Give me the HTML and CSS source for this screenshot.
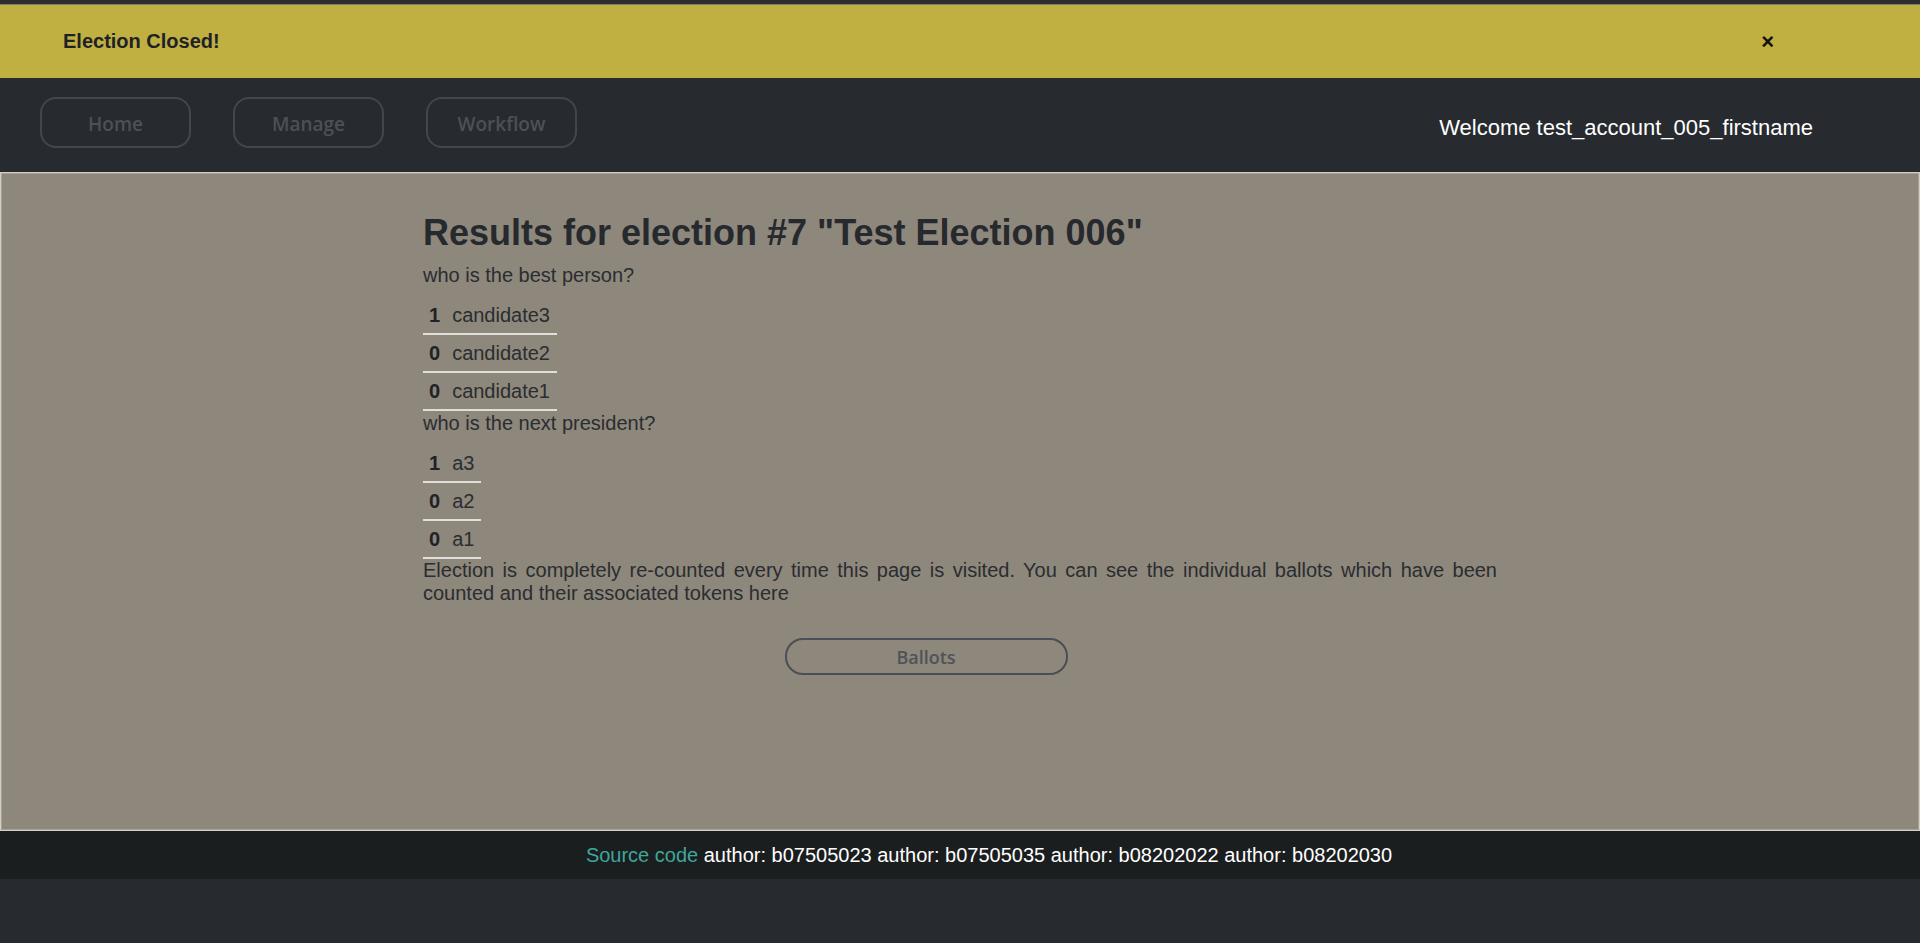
FILE: index.html
```html
<!DOCTYPE html>
<html>
<head>
<meta charset="utf-8">
<link rel="stylesheet" href="styles.css">
</head>
<body>
<div class="topline"></div>
<div class="alert">
  <span class="alert-text">Election Closed!</span>
  <span class="alert-close">&times;</span>
</div>
<nav class="nav">
  <div class="nav-links">
    <a class="nav-btn">Home</a>
    <a class="nav-btn">Manage</a>
    <a class="nav-btn">Workflow</a>
  </div>
  <div class="welcome">Welcome test_account_005_firstname</div>
</nav>
<main class="main">
  <div class="content">
    <h1 class="title">Results for election #7 "Test Election 006"</h1>
    <div class="question">who is the best person?</div>
    <table class="results">
      <tr><td class="num">1</td><td class="name">candidate3</td></tr>
      <tr><td class="num">0</td><td class="name">candidate2</td></tr>
      <tr><td class="num">0</td><td class="name">candidate1</td></tr>
    </table>
    <div class="question q2">who is the next president?</div>
    <table class="results">
      <tr><td class="num">1</td><td class="name">a3</td></tr>
      <tr><td class="num">0</td><td class="name">a2</td></tr>
      <tr><td class="num">0</td><td class="name">a1</td></tr>
    </table>
    <p class="note">Election is completely re-counted every time this page is visited. You can see the individual ballots which have been counted and their associated tokens here</p>
    <div class="btn-row"><a class="ballots-btn">Ballots</a></div>
  </div>
</main>
<footer class="footer">
  <a class="src">Source code</a> author: b07505023 author: b07505035 author: b08202022 author: b08202030
</footer>
</body>
</html>
```
FILE: styles.css
```css
html, body {
  margin: 0;
  padding: 0;
}
body {
  background: #272b2f;
  font-family: "Liberation Sans", Arial, sans-serif;
  min-height: 943px;
}
.topline {
  height: 4px;
  background: #2c2d2f;
  border-bottom: 1px solid #7c7c78;
}
.alert {
  height: 73px;
  background: #c0b042;
  display: flex;
  align-items: center;
  justify-content: space-between;
  padding: 0 146px 0 63px;
  color: #1e2226;
}
.alert-text {
  font-weight: bold;
  font-size: 20px;
}
.alert-close {
  font-size: 22px;
  font-weight: bold;
  color: #111;
  line-height: 1;
}
.nav {
  height: 94px;
  display: flex;
  align-items: center;
  justify-content: space-between;
  padding: 0 107px 0 40px;
}
.nav-links {
  display: flex;
  gap: 42px;
  margin-top: -5px;
}
.nav-btn {
  box-sizing: border-box;
  width: 151px;
  height: 51px;
  padding-top: 3px;
  border: 2px solid #43474b;
  border-radius: 16px;
  display: flex;
  align-items: center;
  justify-content: center;
  font-family: "Open Sans", sans-serif;
  font-weight: 600;
  font-size: 19px;
  color: #4c5156;
}
.welcome {
  color: #ffffff;
  font-size: 22px;
  margin-top: 6px;
}
.main {
  box-sizing: border-box;
  height: 659px;
  background: #8e877b;
  border: 1px solid #d2cec6;
  box-shadow: inset 0 0 0 1px #a8a296;
}
.content {
  width: 1074px;
  margin: 0 auto;
  color: #2a2d31;
  padding-top: 39px;
}
.title {
  margin: 0;
  font-size: 36px;
  font-weight: bold;
  line-height: 42px;
  color: #26292d;
}
.question {
  font-size: 20px;
  line-height: 24px;
  margin-top: 9px;
}
.results {
  border-collapse: collapse;
  margin-top: 10px;
}
.results td {
  border-bottom: 2px solid #e2dfd9;
  height: 36px;
  padding: 0;
  font-size: 20px;
  vertical-align: middle;
}
.results .num {
  font-weight: bold;
  padding: 0 12px 0 6px;
  color: #1f2226;
}
.results .name {
  padding-right: 7px;
}
.q2 {
  margin-top: 0;
  margin-bottom: 0;
}
.note {
  margin: 0;
  font-size: 20px;
  line-height: 23px;
  text-align: justify;
}
.btn-row {
  display: flex;
  justify-content: center;
  margin-top: 33px;
  padding-right: 68px;
}
.ballots-btn {
  box-sizing: border-box;
  width: 283px;
  height: 37px;
  border: 2px solid #4a4f55;
  border-radius: 18px;
  display: flex;
  align-items: center;
  justify-content: center;
  font-family: "Open Sans", sans-serif;
  font-weight: 600;
  font-size: 18px;
  color: #4f5358;
}
.footer {
  height: 48px;
  background: #1b1e1f;
  color: #ffffff;
  font-size: 20px;
  display: flex;
  align-items: center;
  justify-content: center;
  padding-left: 58px;
  white-space: pre;
}
.src {
  color: #3ea69c;
}
```
